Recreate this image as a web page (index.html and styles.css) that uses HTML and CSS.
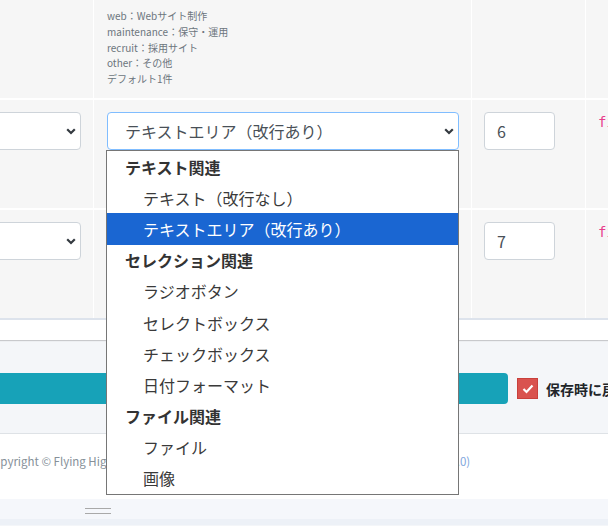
FILE: index.html
```html
<!DOCTYPE html>
<html lang="ja">
<head>
<meta charset="utf-8">
<title>設定</title>
<link rel="stylesheet" href="styles.css">
</head>
<body>
<div class="page">
  <div class="card">
    <div class="grid">
      <div class="cell"></div>
      <div class="cell note">
        <div>web：Webサイト制作</div>
        <div>maintenance：保守・運用</div>
        <div>recruit：採用サイト</div>
        <div>other：その他</div>
        <div>デフォルト1件</div>
      </div>
      <div class="cell"></div>
      <div class="cell"></div>

      <div class="cell pad">
        <div class="select"><span></span><svg class="chev" width="10" height="7" viewBox="0 0 10 7"><polyline points="1.2,1.2 5,5 8.8,1.2" fill="none" stroke="#343a40" stroke-width="2.2"/></svg></div>
      </div>
      <div class="cell pad">
        <div class="select focus"><span>テキストエリア（改行あり）</span><svg class="chev" width="10" height="7" viewBox="0 0 10 7"><polyline points="1.2,1.2 5,5 8.8,1.2" fill="none" stroke="#343a40" stroke-width="2.2"/></svg></div>
      </div>
      <div class="cell pad"><div class="num">6</div></div>
      <div class="cell pad code">fi</div>

      <div class="cell pad">
        <div class="select"><span></span><svg class="chev" width="10" height="7" viewBox="0 0 10 7"><polyline points="1.2,1.2 5,5 8.8,1.2" fill="none" stroke="#343a40" stroke-width="2.2"/></svg></div>
      </div>
      <div class="cell pad">
        <div class="select"><span>テキスト（改行なし）</span><svg class="chev" width="10" height="7" viewBox="0 0 10 7"><polyline points="1.2,1.2 5,5 8.8,1.2" fill="none" stroke="#343a40" stroke-width="2.2"/></svg></div>
      </div>
      <div class="cell pad"><div class="num">7</div></div>
      <div class="cell pad code">fi</div>
    </div>
  </div>

  <div class="actions">
    <div class="btn"></div>
    <label class="check"><span class="box"><svg width="12" height="10" viewBox="0 0 12 10"><polyline points="1.5,5 4.5,8 10.5,1.5" fill="none" stroke="#fff" stroke-width="2.2"/></svg></span><span class="check-label">保存時に戻る</span></label>
  </div>

  <footer class="footer">Copyright © Flying High-Works Inc. All rights reserved. Powered by Flying High CMS <span class="ver">(v1.0.0)</span></footer>
</div>

<div class="resize"><span class="handle"></span></div>
<div class="bottom-strip"></div>

<div class="dropdown">
  <div class="group">テキスト関連</div>
  <div class="opt">テキスト（改行なし）</div>
  <div class="opt sel">テキストエリア（改行あり）</div>
  <div class="group">セレクション関連</div>
  <div class="opt">ラジオボタン</div>
  <div class="opt">セレクトボックス</div>
  <div class="opt">チェックボックス</div>
  <div class="opt">日付フォーマット</div>
  <div class="group">ファイル関連</div>
  <div class="opt">ファイル</div>
  <div class="opt">画像</div>
</div>
</body>
</html>
```

FILE: styles.css
```css
html, body {
  margin: 0;
  padding: 0;
}
body {
  width: 608px;
  height: 526px;
  overflow: hidden;
  position: relative;
  background: #f4f6f9;
  font-family: "Noto Sans CJK JP", "Noto Sans", sans-serif;
  color: #212529;
}
.page {
  margin-left: -30px;
  width: 680px;
}
.card {
  background: #fff;
  padding-bottom: 20px;
  box-shadow: 0 1px 1px rgba(0,0,0,0.18);
  margin-bottom: 1px;
}
.grid {
  display: grid;
  grid-template-columns: 123px 377px 113px 1fr;
  grid-template-rows: 98px 108px 108px;
  gap: 2px 1px;
  background: #fff;
  border-bottom: 2px solid #dde3ec;
}
.cell {
  background: #f6f6f6;
}
.pad {
  padding: 12px 12px 12px 13px;
}
.grid > .cell:nth-child(4n+3).pad,
.grid > .cell:nth-child(4n).pad {
  padding-left: 12px;
}
.note {
  padding: 8px 13px 0;
  font-size: 10px;
  line-height: 15.75px;
  color: #6c757d;
}
.select {
  height: 38px;
  box-sizing: border-box;
  border: 1px solid #ced4da;
  border-radius: 4px;
  background: #fff;
  display: flex;
  align-items: center;
  justify-content: space-between;
  padding: 0 4px 0 17px;
  font-size: 16px;
  color: #495057;
}
.select.focus {
  border-color: #80bdff;
}
.select span {
  white-space: nowrap;
}
.chev {
  margin-top: 1px;
}
.num {
  width: 71px;
  height: 38px;
  box-sizing: border-box;
  border: 1px solid #ced4da;
  border-radius: 4px;
  background: #fff;
  display: flex;
  align-items: center;
  padding-left: 12px;
  font-size: 16px;
  color: #495057;
}
.code {
  font-family: "DejaVu Sans Mono", "Liberation Mono", monospace;
  font-size: 14px;
  line-height: 20px;
  color: #e83e8c;
}
.actions {
  display: flex;
  align-items: center;
  padding: 32px 0 29px;
  gap: 9px;
}
.btn {
  width: 538px;
  height: 31px;
  background: #17a2b8;
  border-radius: 0 4px 4px 0;
}
.check {
  display: flex;
  align-items: center;
  gap: 8px;
  white-space: nowrap;
}
.box {
  width: 21px;
  height: 21px;
  box-sizing: border-box;
  background: #d9534f;
  border: 1px solid #c9403c;
  display: flex;
  align-items: center;
  justify-content: center;
}
.check-label {
  font-size: 14px;
  font-weight: 700;
  color: #212529;
}
.footer {
  background: #fff;
  border-top: 1px solid #dee2e6;
  height: 66px;
  box-sizing: border-box;
  padding: 17px 16px;
  font-size: 11.5px;
  line-height: 20px;
  color: #869099;
  white-space: nowrap;
}
.ver {
  color: #7fa6dd;
}
.resize {
  height: 20px;
  background: #f5f7fb;
  display: flex;
  align-items: center;
  padding-left: 85px;
}
.handle {
  width: 26px;
  height: 6px;
  border-top: 1px solid #a9a9a9;
  border-bottom: 1px solid #a9a9a9;
  box-sizing: border-box;
  margin-top: 4px;
}
.bottom-strip {
  height: 6px;
  background: #edf1f7;
}
.dropdown {
  position: absolute;
  left: 106px;
  top: 150px;
  width: 353px;
  height: 345px;
  box-sizing: border-box;
  border: 1px solid #767676;
  background: #fff;
  font-size: 16px;
  color: #333;
}
.group, .opt {
  height: 31.2px;
  display: flex;
  align-items: center;
  white-space: nowrap;
}
.group {
  padding-left: 18px;
  font-weight: 700;
  color: #333;
}
.opt {
  padding-left: 36px;
  color: #3a3a3a;
}
.opt.sel {
  background: #1a66d2;
  color: #fff;
}
```
